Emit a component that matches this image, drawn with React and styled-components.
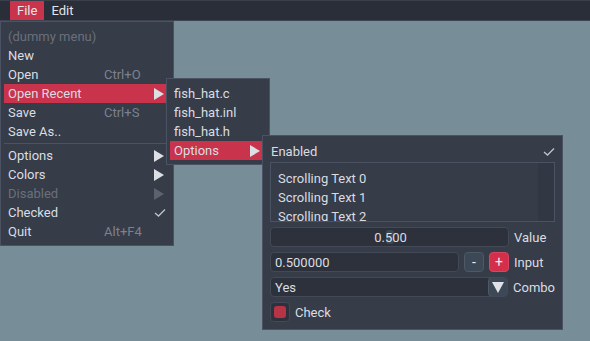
import React from 'react';
import styled, { createGlobalStyle } from 'styled-components';

const GlobalStyle = createGlobalStyle`
  html, body {
    margin: 0;
    padding: 0;
    background: #778d98;
  }
  body {
    font-family: 'Roboto', 'Liberation Sans', sans-serif;
    font-size: 13px;
    color: #d9dce1;
  }
`;

const Desktop = styled.div`
  position: relative;
  width: 590px;
  height: 341px;
  overflow: hidden;
  background: #778d98;
`;

const MenuBar = styled.div`
  display: flex;
  align-items: stretch;
  height: 19px;
  padding: 0 4px 0 10px;
  background: #2a2e39;
  border-top: 1px solid #3a3f4b;
  border-bottom: 1px solid #3e4451;
`;

const BarItem = styled.div`
  display: flex;
  align-items: center;
  padding: 0 7px;
  background: ${(p) => (p.$active ? '#c9334b' : 'transparent')};
  color: #e4e6ea;
`;

const Popup = styled.div`
  position: absolute;
  left: ${(p) => p.$x}px;
  top: ${(p) => p.$y}px;
  width: ${(p) => p.$w}px;
  box-sizing: border-box;
  padding: 5px 3px 4px;
  background: #363c48;
  border: 1px solid #4b5263;
  display: flex;
  flex-direction: column;
`;

const Item = styled.div`
  display: flex;
  align-items: center;
  height: 19px;
  padding: 0 4px;
  background: ${(p) => (p.$active ? '#c9334b' : 'transparent')};
  color: ${(p) => (p.$disabled ? '#6a707b' : '#dadde2')};
  white-space: nowrap;
`;

const Label = styled.span`
  flex: 1;
`;

const Shortcut = styled.span`
  width: 62px;
  color: #7c828d;
`;

const Arrow = styled.span`
  width: 0;
  height: 0;
  margin-right: 2px;
  border-top: 6px solid transparent;
  border-bottom: 6px solid transparent;
  border-left: 10px solid ${(p) => (p.$disabled ? '#5d636e' : '#dcdfe4')};
`;

const Separator = styled.div`
  height: 1px;
  margin: 2px 0 2px;
  background: #4b5263;
`;

const Panel = styled(Popup)`
  padding: 5px 7px 7px;
  gap: 5px;
`;

const Row = styled.div`
  display: flex;
  align-items: center;
  gap: 5px;
  height: 20px;
`;

const EnabledRow = styled(Row)`
  height: 19px;
  padding-left: 1px;
  margin-top: 1px;
  margin-bottom: -4px;
  justify-content: space-between;
`;

const ScrollBox = styled.div`
  display: flex;
  box-sizing: border-box;
  height: 60px;
  border: 1px solid #4b5263;
  overflow: hidden;
`;

const ScrollContent = styled.div`
  flex: 1;
  padding: 6px 7px 0;
  display: flex;
  flex-direction: column;
`;

const ScrollLine = styled.div`
  flex: none;
  height: 19px;
  line-height: 19px;
`;

const ScrollTrack = styled.div`
  width: 16px;
  background: #323843;
`;

const Frame = styled.div`
  position: relative;
  box-sizing: border-box;
  height: 20px;
  width: ${(p) => p.$w}px;
  display: flex;
  align-items: center;
  justify-content: ${(p) => (p.$center ? 'center' : 'flex-start')};
  padding: 0 4px;
  background: #2c313b;
  border: 1px solid #434957;
  border-radius: 4px;
  color: #dadde2;
`;

const Grab = styled.div`
  position: absolute;
  left: 115px;
  top: 2px;
  width: 8px;
  height: 14px;
  border-radius: 3px;
  background: #394853;
`;

const FrameText = styled.span`
  position: relative;
  left: 1px;
`;

const SmallButton = styled.div`
  box-sizing: border-box;
  width: 20px;
  height: 20px;
  display: flex;
  align-items: center;
  justify-content: center;
  border-radius: 4px;
  background: ${(p) => (p.$accent ? '#d42f4a' : '#3c4856')};
  border: 1px solid ${(p) => (p.$accent ? '#d94460' : '#4d5967')};
  color: #e8eaee;
  font-size: 14px;
`;

const ComboFrame = styled(Frame)`
  padding-right: 0;
  justify-content: space-between;
  overflow: hidden;
`;

const ComboArrow = styled.div`
  box-sizing: border-box;
  width: 20px;
  height: 20px;
  margin: -1px;
  display: flex;
  align-items: center;
  justify-content: center;
  background: #3c4856;
  border: 1px solid #4d5967;
  border-radius: 4px;
`;

const DownTriangle = styled.span`
  width: 0;
  height: 0;
  border-left: 6px solid transparent;
  border-right: 6px solid transparent;
  border-top: 11px solid #dfe3e7;
`;

const WidgetLabel = styled.span`
  color: #dadde2;
`;

const CheckBox = styled.div`
  box-sizing: border-box;
  width: 20px;
  height: 20px;
  padding: 3px;
  background: #2c313b;
  border: 1px solid #434957;
  border-radius: 4px;
`;

const CheckFill = styled.div`
  width: 100%;
  height: 100%;
  border-radius: 3px;
  background: #b73447;
`;

const Tick = ({ color = '#bfc3ca' }) => (
  <svg width="12" height="10" viewBox="0 0 12 10">
    <path d="M1 5 L4.5 8 L11 1.5" fill="none" stroke={color} strokeWidth="1.3" />
  </svg>
);

const fileItems = [
  { label: 'New' },
  { label: 'Open', shortcut: 'Ctrl+O' },
  { label: 'Open Recent', sub: true, active: true },
  { label: 'Save', shortcut: 'Ctrl+S' },
  { label: 'Save As..' },
];

const moreItems = [
  { label: 'Options', sub: true },
  { label: 'Colors', sub: true },
  { label: 'Disabled', sub: true, disabled: true },
  { label: 'Checked', check: true },
  { label: 'Quit', shortcut: 'Alt+F4' },
];

const MenuRow = ({ item }) => (
  <Item $active={item.active} $disabled={item.disabled}>
    <Label>{item.label}</Label>
    {item.shortcut && <Shortcut>{item.shortcut}</Shortcut>}
    {item.sub && <Arrow $disabled={item.disabled} />}
    {item.check && <Tick />}
  </Item>
);

const App = () => {
  return (
    <Desktop>
      <GlobalStyle />
      <MenuBar>
        <BarItem $active>File</BarItem>
        <BarItem>Edit</BarItem>
      </MenuBar>

      <Popup $x={0} $y={21} $w={174}>
        <Item $disabled>(dummy menu)</Item>
        {fileItems.map((it) => (
          <MenuRow key={it.label} item={it} />
        ))}
        <Separator />
        {moreItems.map((it) => (
          <MenuRow key={it.label} item={it} />
        ))}
      </Popup>

      <Popup $x={166} $y={78} $w={104}>
        <Item>fish_hat.c</Item>
        <Item>fish_hat.inl</Item>
        <Item>fish_hat.h</Item>
        <MenuRow item={{ label: 'Options', sub: true, active: true }} />
      </Popup>

      <Panel $x={262} $y={135} $w={301}>
        <EnabledRow>
          <span>Enabled</span>
          <Tick />
        </EnabledRow>
        <ScrollBox>
          <ScrollContent>
            <ScrollLine>Scrolling Text 0</ScrollLine>
            <ScrollLine>Scrolling Text 1</ScrollLine>
            <ScrollLine>Scrolling Text 2</ScrollLine>
          </ScrollContent>
          <ScrollTrack />
        </ScrollBox>
        <Row>
          <Frame $w={239} $center>
            <Grab />
            <FrameText>0.500</FrameText>
          </Frame>
          <WidgetLabel>Value</WidgetLabel>
        </Row>
        <Row>
          <Frame $w={189}>0.500000</Frame>
          <SmallButton>-</SmallButton>
          <SmallButton $accent>+</SmallButton>
          <WidgetLabel>Input</WidgetLabel>
        </Row>
        <Row>
          <ComboFrame $w={239}>
            <span>Yes</span>
            <ComboArrow>
              <DownTriangle />
            </ComboArrow>
          </ComboFrame>
          <WidgetLabel>Combo</WidgetLabel>
        </Row>
        <Row>
          <CheckBox>
            <CheckFill />
          </CheckBox>
          <WidgetLabel>Check</WidgetLabel>
        </Row>
      </Panel>
    </Desktop>
  );
};

export default App;
